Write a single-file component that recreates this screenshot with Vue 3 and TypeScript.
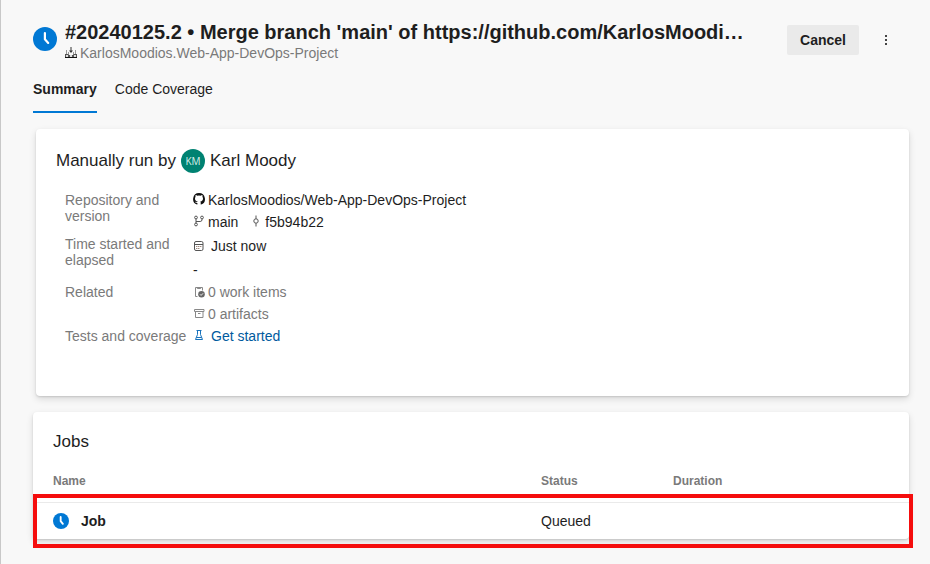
<script setup lang="ts">
interface Job {
  name: string
  status: string
  duration: string
}

const title = "#20240125.2 • Merge branch 'main' of https://github.com/KarlosMoodi…"
const jobs: Job[] = [{ name: 'Job', status: 'Queued', duration: '' }]
</script>

<template>
  <main class="page">
    <header class="header">
      <svg class="clock-large" viewBox="0 0 24 24" aria-hidden="true">
        <circle cx="12" cy="12" r="12" fill="#0078d4" />
        <path d="M11.9 6v6.3l3.3 3.6" fill="none" stroke="#fff" stroke-width="2.2" stroke-linecap="round" stroke-linejoin="round" />
      </svg>
      <div class="heading">
        <h1>{{ title }}</h1>
        <div class="pipeline">
          <svg class="icon" viewBox="0 0 12 12" aria-hidden="true">
            <path d="M5.5 0h1v3.5H8L6 6 4 3.5h1.5z" fill="#333" />
            <path d="M1.5 8V3M3.5 8V5M8.5 8V5M10.5 8V3" stroke="#999" fill="none" />
            <path d="M0 7h3l1 1h4l1-1h3v4H0z" fill="#555" />
            <path d="M1 8h2v2H1zM5 8h2v2H5zM9 8h2v2H9z" fill="#ddd" />
            <path d="M0 10h12v1H0z" fill="#111" />
          </svg>
          <span>KarlosMoodios.Web-App-DevOps-Project</span>
        </div>
      </div>
      <button class="cancel" type="button">Cancel</button>
      <button class="more" type="button" aria-label="More actions">
        <svg viewBox="0 0 12 12" aria-hidden="true">
          <path d="M5 1h2v2H5zM5 5h2v2H5zM5 9h2v2H5z" fill="#444" />
        </svg>
      </button>
    </header>

    <nav class="tabs">
      <a class="tab active" href="#summary">Summary</a>
      <a class="tab" href="#coverage">Code Coverage</a>
    </nav>

    <section class="card summary">
      <h2 class="run-by">
        <span>Manually run by</span>
        <span class="avatar">KM</span>
        <span>Karl Moody</span>
      </h2>
      <dl class="details">
        <dt>Repository and version</dt>
        <dd>
          <div class="line">
            <svg class="icon raised" viewBox="0 0 12 12" aria-hidden="true">
              <path fill="#111" d="M6 0a6 6 0 0 0-2 11.6c.3 0 .4-.1.4-.3V10C2.7 10.300 2.300 9.200 1.900 8.800c1-.3 1.400.8 2.500.3 0-.3.100-.5.300-.7C2.900 8.100 2 7.200 2 5.400c0-.8.3-1.300.6-1.700-.2-.5-.2-1.200.1-1.700.6 0 1.200.4 1.700.7a6 6 0 0 1 3.200 0c.5-.3 1.100-.7 1.700-.7.3.5.3 1.200.1 1.700.3.4.6.9.6 1.700 0 1.800-.9 2.700-2.700 3 .3.300.4.6.4 1.100v1.800c0 .2.1.3.4.3A6 6 0 0 0 6 0z" />
            </svg>
            <span>KarlosMoodios/Web-App-DevOps-Project</span>
          </div>
          <div class="line">
            <svg class="icon raised" viewBox="0 0 12 12" fill="none" stroke="#555" aria-hidden="true">
              <circle cx="3" cy="2.5" r="1.4" />
              <circle cx="9" cy="2.5" r="1.4" />
              <circle cx="3" cy="9.5" r="1.4" />
              <path d="M3 3.9v4.2M9 3.9v.8q0 1.800-1.800 1.800H3" />
            </svg>
            <span>main</span>
            <svg class="icon raised commit" viewBox="0 0 12 12" fill="none" stroke="#555" aria-hidden="true">
              <circle cx="6" cy="6" r="2.2" />
              <path d="M6 .5v3.3M6 8.200v3.300" />
            </svg>
            <span>f5b94b22</span>
          </div>
        </dd>

        <dt>Time started and elapsed</dt>
        <dd class="times">
          <div class="line spaced">
            <svg class="icon" viewBox="0 0 12 12" fill="none" stroke="#555" aria-hidden="true">
              <rect x="1.5" y="1.5" width="8.5" height="9" rx="1.5" />
              <path d="M1.5 4.5H10" />
              <path d="M3.300 6.500h1M5.300 6.500h1M7.300 6.500h1M3.300 8.500h1M5.300 8.500h1" stroke="#7b5a4a" />
            </svg>
            <span>Just now</span>
          </div>
          <div class="line">-</div>
        </dd>

        <dt>Related</dt>
        <dd class="muted">
          <div class="line">
            <svg class="icon" viewBox="0 0 12 12" fill="none" stroke="#888" aria-hidden="true">
              <path d="M4.500 10.500h-2V1.500h7v3M4.300 1.500v1h3.400v-1" />
              <circle cx="8.500" cy="8.300" r="3.300" fill="#666" stroke="none" />
              <path d="M7 8.300l1.100 1.100 2-2.100" stroke="#fff" stroke-width=".9" />
            </svg>
            <span>0 work items</span>
          </div>
          <div class="line">
            <svg class="icon raised" viewBox="0 0 12 12" fill="none" stroke="#888" aria-hidden="true">
              <path d="M1.500 2.500h9.500v2H1.500zM2.500 4.500v6h7.500v-6M5 6.500h2.500" />
            </svg>
            <span>0 artifacts</span>
          </div>
        </dd>

        <dt>Tests and coverage</dt>
        <dd>
          <div class="line spaced">
            <svg class="icon" viewBox="0 0 12 12" fill="none" stroke="#1873bd" aria-hidden="true">
              <path d="M3.500.5h5M4.500.5v4L2.500 9.500h7l-2-5v-4M3.300 7.500h5.400" />
            </svg>
            <a class="link" href="#tests">Get started</a>
          </div>
        </dd>
      </dl>
    </section>

    <section class="card jobs">
      <h2>Jobs</h2>
      <table>
        <thead>
          <tr>
            <th class="name" scope="col">Name</th>
            <th class="status" scope="col">Status</th>
            <th scope="col">Duration</th>
          </tr>
        </thead>
        <tbody>
          <tr v-for="job in jobs" :key="job.name">
            <td>
              <span class="job-name">
                <svg class="clock-small" viewBox="0 0 24 24" aria-hidden="true">
                  <circle cx="12" cy="12" r="12" fill="#0078d4" />
                  <path d="M11.5 6v6.300l3.300 4" fill="none" stroke="#fff" stroke-width="2.800" stroke-linecap="round" stroke-linejoin="round" />
                </svg>
                <span>{{ job.name }}</span>
              </span>
            </td>
            <td>{{ job.status }}</td>
            <td>{{ job.duration }}</td>
          </tr>
        </tbody>
      </table>
      <div class="highlight" aria-hidden="true"></div>
    </section>
  </main>
</template>

<style>
body {
  background: #f8f8f8;
}
</style>

<style scoped>
.page {
  box-sizing: border-box;
  min-height: 100vh;
  padding: 20px 21px 24px 32px;
  border-left: 1px solid #c8c8c8;
  color: #1e1e1e;
  font: 14px/16px "Liberation Sans", Arial, sans-serif;
}

h1,
h2,
dl,
dd {
  margin: 0;
}

.header {
  display: flex;
  align-items: flex-start;
  height: 56px;
}

.clock-large {
  flex: none;
  width: 24px;
  height: 24px;
  margin: 7px 8px 0 0;
}

.heading {
  flex: 1;
  min-width: 0;
}

h1 {
  overflow: hidden;
  font-size: 20px;
  font-weight: 700;
  line-height: 25px;
  text-overflow: ellipsis;
  white-space: nowrap;
}

.pipeline {
  display: flex;
  align-items: center;
  gap: 3px;
  color: #7a7a7a;
}

.icon {
  flex: none;
  width: 12px;
  height: 12px;
}

.icon.raised {
  margin-bottom: 2px;
}

.cancel {
  flex: none;
  width: 72px;
  height: 30px;
  margin: 5px 12px 0 0;
  padding: 0;
  border: 0;
  border-radius: 2px;
  background: #eaeaea;
  color: inherit;
  font: inherit;
  font-weight: 700;
}

.more {
  display: grid;
  place-items: center;
  flex: none;
  width: 30px;
  height: 30px;
  margin: 5px 8px 0 0;
  padding: 0;
  border: 0;
  background: none;
}

.more svg {
  width: 12px;
  height: 12px;
}

.tabs {
  display: flex;
  gap: 18px;
  margin-bottom: 16px;
}

.tab {
  padding: 5px 0 14px;
  border-bottom: 2px solid transparent;
  color: inherit;
  text-decoration: none;
}

.tab.active {
  border-color: #0078d4;
  font-weight: 700;
}

.card {
  border-radius: 4px;
  background: #fff;
  box-shadow: 0 3px 7px rgba(0, 0, 0, 0.13), 0 1px 2px rgba(0, 0, 0, 0.12);
}

.summary {
  margin: 0 0 16px 3px;
  padding: 20px 20px 49px;
}

h2 {
  font-size: 17px;
  font-weight: 400;
  line-height: 24px;
}

.run-by {
  display: flex;
  gap: 5px;
}

.avatar {
  width: 24px;
  height: 24px;
  border-radius: 50%;
  background: #008272;
  color: #d8eeea;
  font: 10px/24px "Open Sans", sans-serif;
  text-align: center;
}

.details {
  display: grid;
  grid-template-columns: 128px 1fr;
  margin: 16px 0 0 9px;
}

dt {
  padding: 3px 4px 0 0;
  color: #7a7a7a;
}

.line {
  display: flex;
  align-items: center;
  gap: 3px;
  height: 22px;
}

.line.spaced {
  gap: 6px;
}

.times {
  display: grid;
  gap: 2px;
  padding-top: 2px;
}

.commit {
  margin-left: 9px;
}

.muted {
  color: #7a7a7a;
}

.link {
  color: #005a9e;
  text-decoration: none;
}

.jobs {
  position: relative;
}

.jobs h2 {
  padding: 18px 20px;
}

table {
  width: 100%;
  border-collapse: collapse;
  table-layout: fixed;
}

th,
td {
  padding: 0;
  text-align: left;
}

th {
  height: 30px;
  padding-bottom: 12px;
  box-sizing: border-box;
  color: #7a7a7a;
  font-size: 12px;
  font-weight: 700;
}

td {
  height: 36px;
  border-top: 1px solid #eaeaea;
}

th:first-child,
td:first-child {
  padding-left: 20px;
}

.name {
  width: 508px;
}

.status {
  width: 132px;
}

.job-name {
  display: flex;
  align-items: center;
  gap: 12px;
  font-weight: 700;
}

.clock-small {
  width: 16px;
  height: 16px;
}

.highlight {
  position: absolute;
  right: -4px;
  bottom: -9px;
  left: 0;
  height: 46px;
  border: 4px solid #f50d0d;
  pointer-events: none;
}
</style>
